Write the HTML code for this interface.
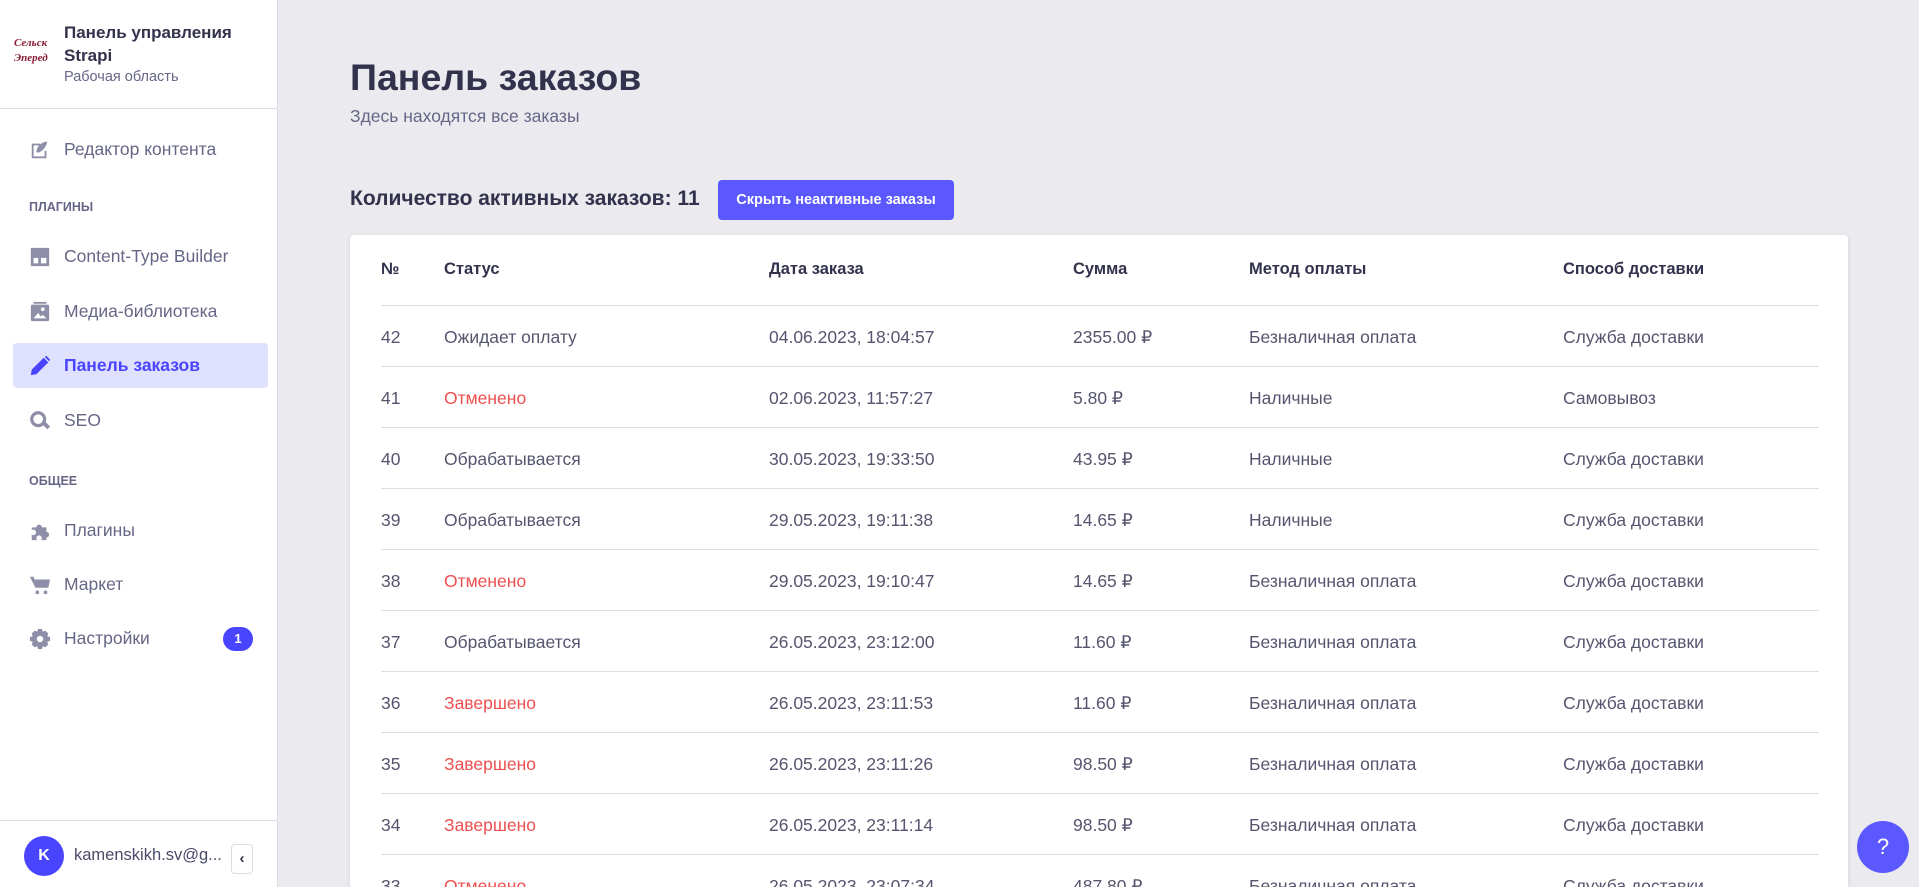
<!DOCTYPE html>
<html style="overflow:hidden;height:887px"><head><meta charset="utf-8"><style>
*{box-sizing:border-box;margin:0;padding:0}
html,body{overflow:hidden}
body{width:1919px;height:887px;overflow:hidden;background:#eaeaef;font-family:"Liberation Sans","Noto Sans CJK SC",sans-serif;color:#32324d;position:relative}
.sb{position:absolute;left:0;top:0;width:278px;height:887px;background:#fff;border-right:1px solid #dcdce4}
.abs{position:absolute}
.nav{position:absolute;left:13px;width:255px;height:45px;display:flex;align-items:center;font-size:17.5px;color:#666687}
.nav svg{position:absolute;left:16px;width:22px;height:22px}
.nav span{position:absolute;left:51px}
.sec{position:absolute;left:29px;font-size:12.5px;font-weight:700;color:#666687}
.card{position:absolute;left:350px;top:235px;width:1498px;height:652px;overflow:hidden;background:#fff;border-radius:4px 4px 0 0;box-shadow:0 1px 4px rgba(33,33,52,.12)}
table{position:absolute;left:31px;top:0;width:1438px;border-collapse:collapse;font-size:17.5px}
th{height:70px;text-align:left;font-weight:700;font-size:16.5px;color:#32324d;border-bottom:1px solid #dcdce4;padding:0}
td{height:61px;color:#55556f;border-bottom:1px solid #dcdce4;padding:0;padding-top:3px}
.r{color:#ee4f4f}
</style></head><body>
<div class="sb">
 <div class="abs" style="left:14px;top:36px;width:38px;height:34px;color:#8a1c35;font-family:'Liberation Serif',serif;font-size:11px;line-height:15px;font-style:italic;font-weight:700">Сельск<br>Эперед</div>
 <div class="abs" style="left:64px;top:21px;font-size:17px;font-weight:700;line-height:23px;color:#32324d">Панель управления<br>Strapi</div>
 <div class="abs" style="left:64px;top:69px;font-size:14.5px;color:#666687">Рабочая область</div>
 <div class="abs" style="left:0;top:108px;width:278px;height:1px;background:#dcdce4"></div>

 <div class="nav" style="top:127px"><svg viewBox="0 0 24 24"><path d="M3 5h9v2H5v12h12v-6h2v8H3z" fill="#8e8ea9"/><path d="M20 3c-6 0-11 4-12 11l2 1c3-1 8-4 10-12z" fill="#8e8ea9"/></svg><span>Редактор контента</span></div>
 <div class="sec" style="top:200px">ПЛАГИНЫ</div>
 <div class="nav" style="top:234px"><svg viewBox="0 0 24 24"><path d="M2 2h20v20H2z M5 8v11h5v-6H5zm8 5v6h6v-6z" fill="#8e8ea9" fill-rule="evenodd"/></svg><span>Content-Type Builder</span></div>
 <div class="nav" style="top:289px"><svg viewBox="0 0 24 24"><rect x="5" y="1" width="14" height="2" fill="#8e8ea9"/><rect x="2" y="4" width="20" height="18" rx="2" fill="#8e8ea9"/><path d="M5 19l5-6 3 4 2-2 4 4z" fill="#fff"/><circle cx="15" cy="9" r="2" fill="#fff"/></svg><span>Медиа-библиотека</span></div>
 <div class="nav" style="top:343px;background:#e0e0ff;border-radius:4px;color:#4945ff;font-weight:700"><svg viewBox="0 0 24 24"><path d="M2 22l1-6L16 3l5 5L8 21z" fill="#4945ff"/><path d="M17 2l2-1 4 4-1 2z" fill="#4945ff"/></svg><span>Панель заказов</span></div>
 <div class="nav" style="top:398px"><svg viewBox="0 0 24 24"><circle cx="10" cy="10" r="7" fill="none" stroke="#8e8ea9" stroke-width="3.5"/><path d="M14 15l3-3 6 6-3 3z" fill="#8e8ea9"/></svg><span>SEO</span></div>
 <div class="sec" style="top:474px">ОБЩЕЕ</div>
 <div class="nav" style="top:508px"><svg viewBox="0 0 24 24"><path d="M3 8h5a3 3 0 116 0h5v5a3 3 0 110 6v3h-6a3 3 0 10-4 0H3v-6a3 3 0 100-5z" fill="#8e8ea9"/></svg><span>Плагины</span></div>
 <div class="nav" style="top:562px"><svg viewBox="0 0 24 24"><path d="M1 3h4l1 3h17l-2 9H7z" fill="#8e8ea9"/><circle cx="9" cy="20" r="2" fill="#8e8ea9"/><circle cx="18" cy="20" r="2" fill="#8e8ea9"/></svg><span>Маркет</span></div>
 <div class="nav" style="top:616px"><svg viewBox="0 0 24 24"><path d="M10 1h4l1 3 3-1 3 3-1 3 3 1v4l-3 1 1 3-3 3-3-1-1 3h-4l-1-3-3 1-3-3 1-3-3-1v-4l3-1-1-3 3-3 3 1z" fill="#8e8ea9"/><circle cx="12" cy="12" r="3.5" fill="#fff"/></svg><span>Настройки</span>
  <div class="abs" style="left:210px;top:11px;width:30px;height:24px;border-radius:12px;background:#4945ff;color:#fff;font-size:13px;font-weight:700;text-align:center;line-height:24px">1</div></div>

 <div class="abs" style="left:0;top:820px;width:278px;height:1px;background:#dcdce4"></div>
 <div class="abs" style="left:24px;top:836px;width:40px;height:40px;border-radius:50%;background:#4945ff;color:#fff;font-size:16px;font-weight:700;text-align:center;line-height:40px">K</div>
 <div class="abs" style="left:74px;top:846px;font-size:16.5px;color:#4a4a6a">kamenskikh.sv@g...</div>
 <div class="abs" style="left:231px;top:844px;width:22px;height:30px;border:1px solid #dcdce4;border-radius:4px;text-align:center;line-height:28px;font-size:15px;font-weight:700;color:#32324d">‹</div>
</div>

<div class="abs" style="left:350px;top:56px;font-size:37.5px;font-weight:700;color:#32324d">Панель заказов</div>
<div class="abs" style="left:350px;top:106px;font-size:17.5px;color:#666687">Здесь находятся все заказы</div>
<div class="abs" style="left:350px;top:187px;font-size:21px;font-weight:700;color:#32324d">Количество активных заказов: 11</div>
<div class="abs" style="left:718px;top:180px;width:236px;height:40px;background:#5b58ff;border-radius:4px;color:#fff;font-size:14.5px;font-weight:700;text-align:center;line-height:40px">Скрыть неактивные заказы</div>

<div class="card"><table>
<colgroup><col style="width:63px"><col style="width:325px"><col style="width:304px"><col style="width:176px"><col style="width:314px"><col></colgroup>
<tr><th>№</th><th>Статус</th><th>Дата заказа</th><th>Сумма</th><th>Метод оплаты</th><th>Способ доставки</th></tr>
<tr><td>42</td><td>Ожидает оплату</td><td>04.06.2023, 18:04:57</td><td>2355.00 ₽</td><td>Безналичная оплата</td><td>Служба доставки</td></tr>
<tr><td>41</td><td class="r">Отменено</td><td>02.06.2023, 11:57:27</td><td>5.80 ₽</td><td>Наличные</td><td>Самовывоз</td></tr>
<tr><td>40</td><td>Обрабатывается</td><td>30.05.2023, 19:33:50</td><td>43.95 ₽</td><td>Наличные</td><td>Служба доставки</td></tr>
<tr><td>39</td><td>Обрабатывается</td><td>29.05.2023, 19:11:38</td><td>14.65 ₽</td><td>Наличные</td><td>Служба доставки</td></tr>
<tr><td>38</td><td class="r">Отменено</td><td>29.05.2023, 19:10:47</td><td>14.65 ₽</td><td>Безналичная оплата</td><td>Служба доставки</td></tr>
<tr><td>37</td><td>Обрабатывается</td><td>26.05.2023, 23:12:00</td><td>11.60 ₽</td><td>Безналичная оплата</td><td>Служба доставки</td></tr>
<tr><td>36</td><td class="r">Завершено</td><td>26.05.2023, 23:11:53</td><td>11.60 ₽</td><td>Безналичная оплата</td><td>Служба доставки</td></tr>
<tr><td>35</td><td class="r">Завершено</td><td>26.05.2023, 23:11:26</td><td>98.50 ₽</td><td>Безналичная оплата</td><td>Служба доставки</td></tr>
<tr><td>34</td><td class="r">Завершено</td><td>26.05.2023, 23:11:14</td><td>98.50 ₽</td><td>Безналичная оплата</td><td>Служба доставки</td></tr>
<tr><td>33</td><td class="r">Отменено</td><td>26.05.2023, 23:07:34</td><td>487.80 ₽</td><td>Безналичная оплата</td><td>Служба доставки</td></tr>
</table></div>

<div class="abs" style="left:1857px;top:821px;width:52px;height:52px;border-radius:50%;background:#5b58ff;color:#fff;font-size:22px;text-align:center;line-height:52px">?</div>
</body></html>
